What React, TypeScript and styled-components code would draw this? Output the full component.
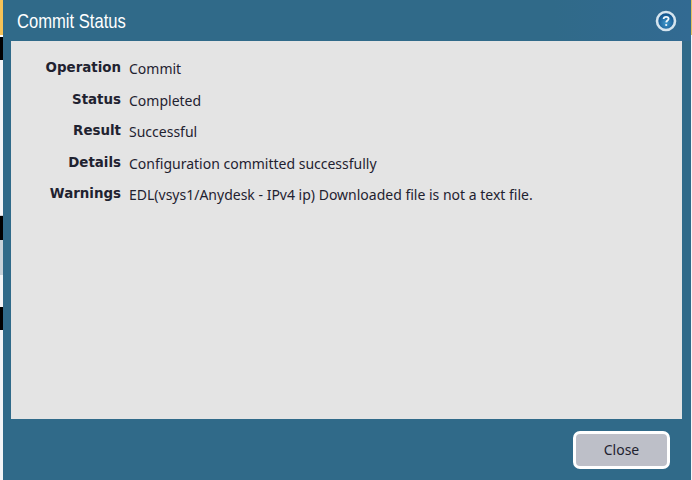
import React from "react";
import styled, { createGlobalStyle } from "styled-components";

const GlobalStyle = createGlobalStyle`
  html, body {
    margin: 0;
    padding: 0;
    background: #f4f5f7;
  }
`;

const Page = styled.div`
  display: flex;
  width: 692px;
  height: 480px;
  overflow: hidden;
`;

const Strip = styled.div<{ $width: number }>`
  display: flex;
  flex-direction: column;
  flex: none;
  width: ${({ $width }) => $width}px;
`;

const StripBand = styled.div<{ $height: number; $color: string }>`
  flex: none;
  height: ${({ $height }) => $height}px;
  background: ${({ $color }) => $color};
`;

const Dialog = styled.div`
  display: flex;
  flex-direction: column;
  flex: 1;
  min-width: 0;
  background: #306a89;
`;

const Header = styled.header`
  display: flex;
  align-items: center;
  justify-content: space-between;
  flex: none;
  height: 41px;
  padding: 0 13px 0 14px;
  box-sizing: border-box;
  background: linear-gradient(90deg, #306a89 0%, #306a89 80%, #326a92 100%);
`;

const Title = styled.h1`
  margin: 0;
  font-family: "Liberation Sans", sans-serif;
  font-size: 21px;
  font-weight: 400;
  color: #ffffff;
  white-space: nowrap;
  transform: scaleX(0.79);
  transform-origin: left center;
`;

const HelpIcon = styled.svg`
  display: block;
  width: 24px;
  height: 24px;
`;

const Content = styled.main`
  flex: 1;
  margin: 0 9px 0 8px;
  padding: 12px 0 0 0;
  background: #e4e4e4;
`;

const Details = styled.dl`
  display: grid;
  grid-template-columns: 110px 1fr;
  grid-auto-rows: 31.5px;
  column-gap: 8px;
  margin: 0;
  align-items: center;
  color: #1f2230;
`;

const Label = styled.dt`
  padding-bottom: 2px;
  font-family: "DejaVu Sans", sans-serif;
  font-size: 13.4px;
  font-weight: 700;
  text-align: right;
`;

const Value = styled.dd`
  margin: 0;
  font-family: "Noto Sans", sans-serif;
  font-size: 14px;
`;

const Footer = styled.footer`
  display: flex;
  align-items: center;
  justify-content: flex-end;
  flex: none;
  height: 61px;
  padding: 0 21px 0 0;
  box-sizing: border-box;
`;

const CloseButton = styled.button`
  width: 97px;
  height: 38px;
  border: 3px solid #ffffff;
  border-radius: 7px;
  background: #bdbfc8;
  color: #1f2230;
  font-family: "Noto Sans", sans-serif;
  font-size: 14px;
  padding: 0;
`;

const rows = [
  ["Operation", "Commit"],
  ["Status", "Completed"],
  ["Result", "Successful"],
  ["Details", "Configuration committed successfully"],
  ["Warnings", "EDL(vsys1/Anydesk - IPv4 ip) Downloaded file is not a text file."],
];

const leftBands = [
  [35, "#f5c257"],
  [2, "#ffffff"],
  [23, "#000000"],
  [155, "#f4f5f7"],
  [1, "#c9ced4"],
  [24, "#000000"],
  [35, "#c9d2da"],
  [32, "#f4f5f7"],
  [23, "#000000"],
  [150, "#f4f5f7"],
] as const;

const Help = () => (
  <HelpIcon viewBox="0 0 24 24" aria-hidden="true">
    <defs>
      <radialGradient id="helpFill" cx="50%" cy="62%" r="55%">
        <stop offset="0%" stopColor="#3f97cc" />
        <stop offset="100%" stopColor="#0f4f88" />
      </radialGradient>
    </defs>
    <circle cx="12" cy="12" r="9" fill="url(#helpFill)" stroke="#d5e4ee" strokeWidth="2.6" />
    <path
      d="M9.6 10c.1-1.4 1.1-2.2 2.5-2.2 1.5 0 2.5.8 2.5 2 0 1.7-2.3 1.8-2.4 3.6"
      fill="none"
      stroke="#f2f7fa"
      strokeWidth="1.8"
    />
    <circle cx="12.2" cy="16" r="1.1" fill="#f2f7fa" />
  </HelpIcon>
);

export default function App() {
  return (
    <Page>
      <GlobalStyle />
      <Strip $width={3}>
        {leftBands.map(([height, color], i) => (
          <StripBand key={i} $height={height} $color={color} />
        ))}
      </Strip>
      <Dialog>
        <Header>
          <Title>Commit Status</Title>
          <Help />
        </Header>
        <Content>
          <Details>
            {rows.map(([label, value]) => (
              <React.Fragment key={label}>
                <Label>{label}</Label>
                <Value>{value}</Value>
              </React.Fragment>
            ))}
          </Details>
        </Content>
        <Footer>
          <CloseButton>Close</CloseButton>
        </Footer>
      </Dialog>
      <Strip $width={1}>
        <StripBand $height={35} $color="#e3c05f" />
        <StripBand $height={445} $color="#f4f5f7" />
      </Strip>
    </Page>
  );
}
